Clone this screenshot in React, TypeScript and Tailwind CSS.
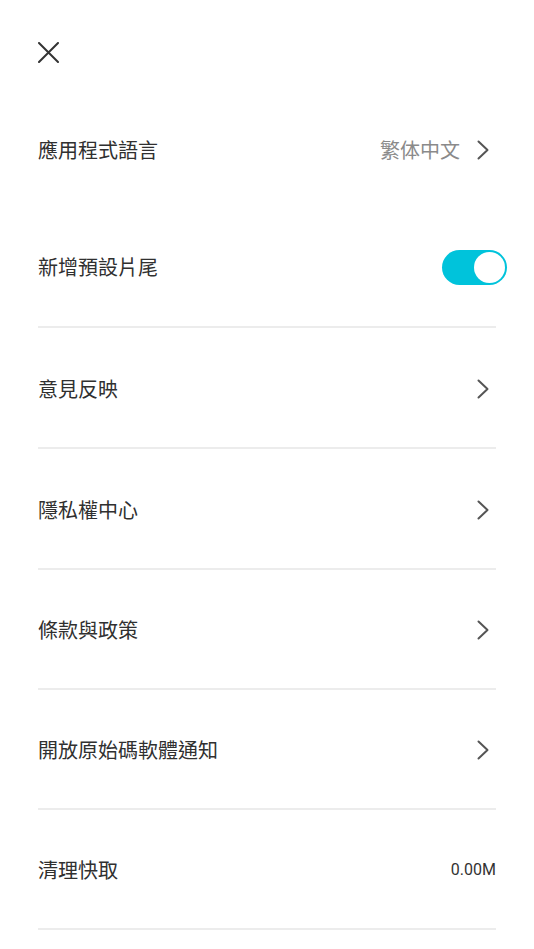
import React, { useState } from 'react'

function Chevron() {
  return (
    <svg width="12" height="20" viewBox="0 0 12 20" fill="none" className="mr-[7px] shrink-0">
      <path d="M1.5 1.5 L10.5 10 L1.5 18.5" stroke="#555555" strokeWidth="2" strokeLinecap="round" strokeLinejoin="round" />
    </svg>
  )
}

function Row({ label, children, border = true, tall = false, top = false }: { label: string; children?: React.ReactNode; border?: boolean; tall?: boolean; top?: boolean }) {
  return (
    <div className={`flex items-center justify-between ${top ? '' : 'pt-[2px]'} ${tall ? 'h-[121px]' : 'h-[120px]'} ${border ? 'border-b-2 border-[#ececec]' : ''}`}>
      <span className="text-[20px] text-[#303030]">{label}</span>
      <div className="flex items-center">{children}</div>
    </div>
  )
}

export default function App() {
  const [outro, setOutro] = useState(true)

  return (
    <div className="min-h-screen bg-white px-[38px] font-['Noto_Sans_CJK_TC','Noto_Sans',sans-serif]">
      {/* Header */}
      <div className="h-[90px] pt-[42px]">
        <button className="block">
          <svg width="21" height="21" viewBox="0 0 21 21" fill="none">
            <path d="M1 1 L20 20 M20 1 L1 20" stroke="#333333" strokeWidth="2" strokeLinecap="round" />
          </svg>
        </button>
      </div>

      <Row label="應用程式語言" border={false} top>
        <span className="mr-[17px] text-[20px] text-[#8a8a8a]">繁体中文</span>
        <Chevron />
      </Row>

      <div className="-mt-[2px]">
        <Row label="新增預設片尾" top>
          <button
            onClick={() => setOutro(!outro)}
            className={`-mr-[11px] flex h-[35px] w-[65px] items-center rounded-full p-[2px] ${outro ? 'justify-end bg-[#00c3db]' : 'justify-start bg-[#d9d9d9]'}`}
          >
            <span className="block h-[31px] w-[31px] rounded-full bg-white" />
          </button>
        </Row>
      </div>

      <Row label="意見反映" tall>
        <Chevron />
      </Row>
      <Row label="隱私權中心" tall>
        <Chevron />
      </Row>
      <Row label="條款與政策">
        <Chevron />
      </Row>
      <Row label="開放原始碼軟體通知">
        <Chevron />
      </Row>
      <Row label="清理快取">
        <span className="font-['Roboto',sans-serif] text-[16px] text-[#333333]">0.00M</span>
      </Row>
    </div>
  )
}
